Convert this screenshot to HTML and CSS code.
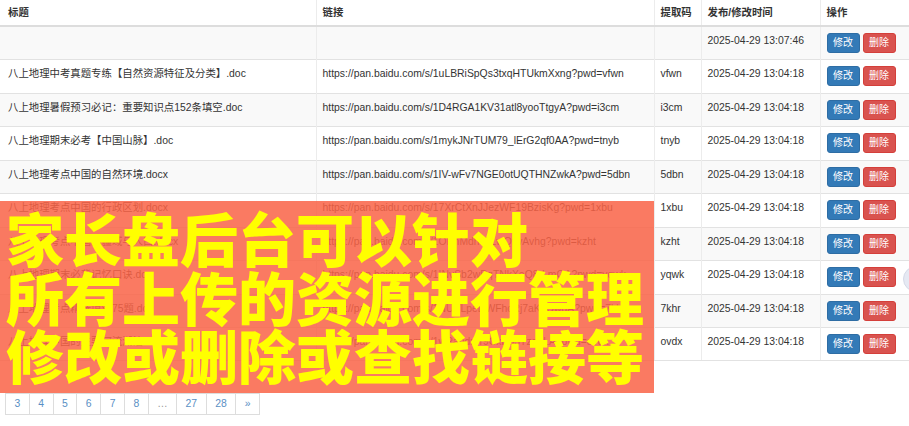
FILE: index.html
```html
<!DOCTYPE html>
<html lang="zh-CN">
<head>
<meta charset="utf-8">
<title>资源管理</title>
<link rel="stylesheet" href="styles.css">
</head>
<body>
<div class="page">
  <table class="grid">
    <colgroup>
      <col class="c-title"><col class="c-link"><col class="c-code"><col class="c-time"><col class="c-ops">
    </colgroup>
    <thead>
      <tr><th>标题</th><th>链接</th><th>提取码</th><th>发布/修改时间</th><th>操作</th></tr>
    </thead>
    <tbody>
      <tr><td></td><td></td><td></td><td>2025-04-29 13:07:46</td><td><div class="actions"><span class="btn edit">修改</span><span class="btn del">删除</span></div></td></tr>
      <tr><td>八上地理中考真题专练【自然资源特征及分类】.doc</td><td>https://pan.baidu.com/s/1uLBRiSpQs3txqHTUkmXxng?pwd=vfwn</td><td>vfwn</td><td>2025-04-29 13:04:18</td><td><div class="actions"><span class="btn edit">修改</span><span class="btn del">删除</span></div></td></tr>
      <tr><td>八上地理暑假预习必记：重要知识点152条填空.doc</td><td>https://pan.baidu.com/s/1D4RGA1KV31atl8yooTtgyA?pwd=i3cm</td><td>i3cm</td><td>2025-04-29 13:04:18</td><td><div class="actions"><span class="btn edit">修改</span><span class="btn del">删除</span></div></td></tr>
      <tr><td>八上地理期末必考【中国山脉】.doc</td><td>https://pan.baidu.com/s/1mykJNrTUM79_lErG2qf0AA?pwd=tnyb</td><td>tnyb</td><td>2025-04-29 13:04:18</td><td><div class="actions"><span class="btn edit">修改</span><span class="btn del">删除</span></div></td></tr>
      <tr><td>八上地理考点中国的自然环境.docx</td><td>https://pan.baidu.com/s/1IV-wFv7NGE0otUQTHNZwkA?pwd=5dbn</td><td>5dbn</td><td>2025-04-29 13:04:18</td><td><div class="actions"><span class="btn edit">修改</span><span class="btn del">删除</span></div></td></tr>
      <tr><td>八上地理考点中国的行政区划.docx</td><td>https://pan.baidu.com/s/17XrCtXnJJezWF19BzisKg?pwd=1xbu</td><td>1xbu</td><td>2025-04-29 13:04:18</td><td><div class="actions"><span class="btn edit">修改</span><span class="btn del">删除</span></div></td></tr>
      <tr><td>八上地理考点中国的疆域与人口.docx</td><td>https://pan.baidu.com/s/1OPnMdh9kLwQzvAvhg?pwd=kzht</td><td>kzht</td><td>2025-04-29 13:04:18</td><td><div class="actions"><span class="btn edit">修改</span><span class="btn del">删除</span></div></td></tr>
      <tr><td>八上地理期末必背记忆口诀.doc</td><td>https://pan.baidu.com/s/1INvSb2wPqTNkXeQ8rLmGA?pwd=yqwk</td><td>yqwk</td><td>2025-04-29 13:04:18</td><td><div class="actions"><span class="btn edit">修改</span><span class="btn del">删除</span></div></td></tr>
      <tr><td>八上地理考点精选填空75题.doc</td><td>https://pan.baidu.com/s/1NUVLpeDWFhcRj7aKsQwdA?pwd=7khr</td><td>7khr</td><td>2025-04-29 13:04:18</td><td><div class="actions"><span class="btn edit">修改</span><span class="btn del">删除</span></div></td></tr>
      <tr><td>八上地理中国的主要河流湖泊.docx</td><td>https://pan.baidu.com/s/1wPabdr7r9CxbS3Tzq0LA?pwd=ovdx</td><td>ovdx</td><td>2025-04-29 13:04:18</td><td><div class="actions"><span class="btn edit">修改</span><span class="btn del">删除</span></div></td></tr>
    </tbody>
  </table>

  <div class="pager">
    <span>3</span><span>4</span><span>5</span><span>6</span><span>7</span><span>8</span><span class="gap">…</span><span>27</span><span>28</span><span>»</span>
  </div>

  <div class="banner">
    <div>家长盘后台可以针对</div>
    <div>所有上传的资源进行管理</div>
    <div>修改或删除或查找链接等</div>
  </div>

  <div class="float-dot"></div>
</div>
</body>
</html>
```
FILE: styles.css
```css
html, body {
  margin: 0;
  padding: 0;
}
body {
  width: 909px;
  height: 426px;
  overflow: hidden;
  background: #fff;
  color: #333;
  font-family: "Liberation Sans", "Noto Sans CJK SC", sans-serif;
  font-size: 10.4px;
}
.page {
  position: relative;
  width: 909px;
  height: 426px;
}
.grid {
  width: 909px;
  border-collapse: collapse;
  table-layout: fixed;
}
.c-title { width: 316px; }
.c-link { width: 338px; }
.c-code { width: 47px; }
.c-time { width: 119px; }
.c-ops { width: 89px; }

.grid th {
  text-align: left;
  font-weight: bold;
  height: 20px;
  padding: 5px 6px 0;
  line-height: 15px;
  vertical-align: top;
  border-bottom: 2px solid #ddd;
  border-left: 1px solid #ececec;
  white-space: nowrap;
}
.grid td {
  height: 26.44px;
  padding: 6px 6px 0;
  line-height: 15px;
  vertical-align: top;
  border-top: 1px solid #e2e2e2;
  border-left: 1px solid #ececec;
  white-space: nowrap;
  overflow: hidden;
}
.grid th:first-child,
.grid td:first-child {
  padding-left: 8px;
  border-left: none;
}
.grid tbody tr:nth-child(odd) td {
  background: #f9f9f9;
}
.grid tbody tr:last-child td {
  border-bottom: 1px solid #e2e2e2;
}

.actions {
  display: flex;
  gap: 3px;
}
.btn {
  display: block;
  width: 33px;
  height: 20px;
  box-sizing: border-box;
  border: 1px solid;
  border-radius: 3px;
  color: #fff;
  font-size: 10px;
  line-height: 18px;
  text-align: center;
}
.btn.edit {
  background: #337ab7;
  border-color: #2e6da4;
}
.btn.del {
  background: #d9534f;
  border-color: #d43f3a;
}

.pager {
  display: flex;
  margin: 32px 0 0 5px;
}
.pager span {
  height: 20px;
  line-height: 20px;
  padding: 0 8.5px;
  border: 1px solid #ddd;
  margin-left: -1px;
  color: #5a8fc4;
  background: #fff;
}
.pager span:first-child {
  margin-left: 0;
}
.pager .gap {
  color: #999;
}

.banner {
  position: absolute;
  left: 0;
  top: 201px;
  width: 654px;
  height: 192px;
  box-sizing: border-box;
  padding: 7px 0 0 6px;
  background: rgba(249, 99, 70, 0.85);
  color: #ffff00;
  font-family: "Noto Sans CJK SC", sans-serif;
  font-weight: 900;
  font-size: 58px;
  line-height: 58.5px;
  white-space: nowrap;
}

.float-dot {
  position: absolute;
  left: 903px;
  top: 266px;
  width: 24px;
  height: 24px;
  border-radius: 50%;
  background: #e6e9f3;
  border: 1px solid #d5dae8;
}
```
